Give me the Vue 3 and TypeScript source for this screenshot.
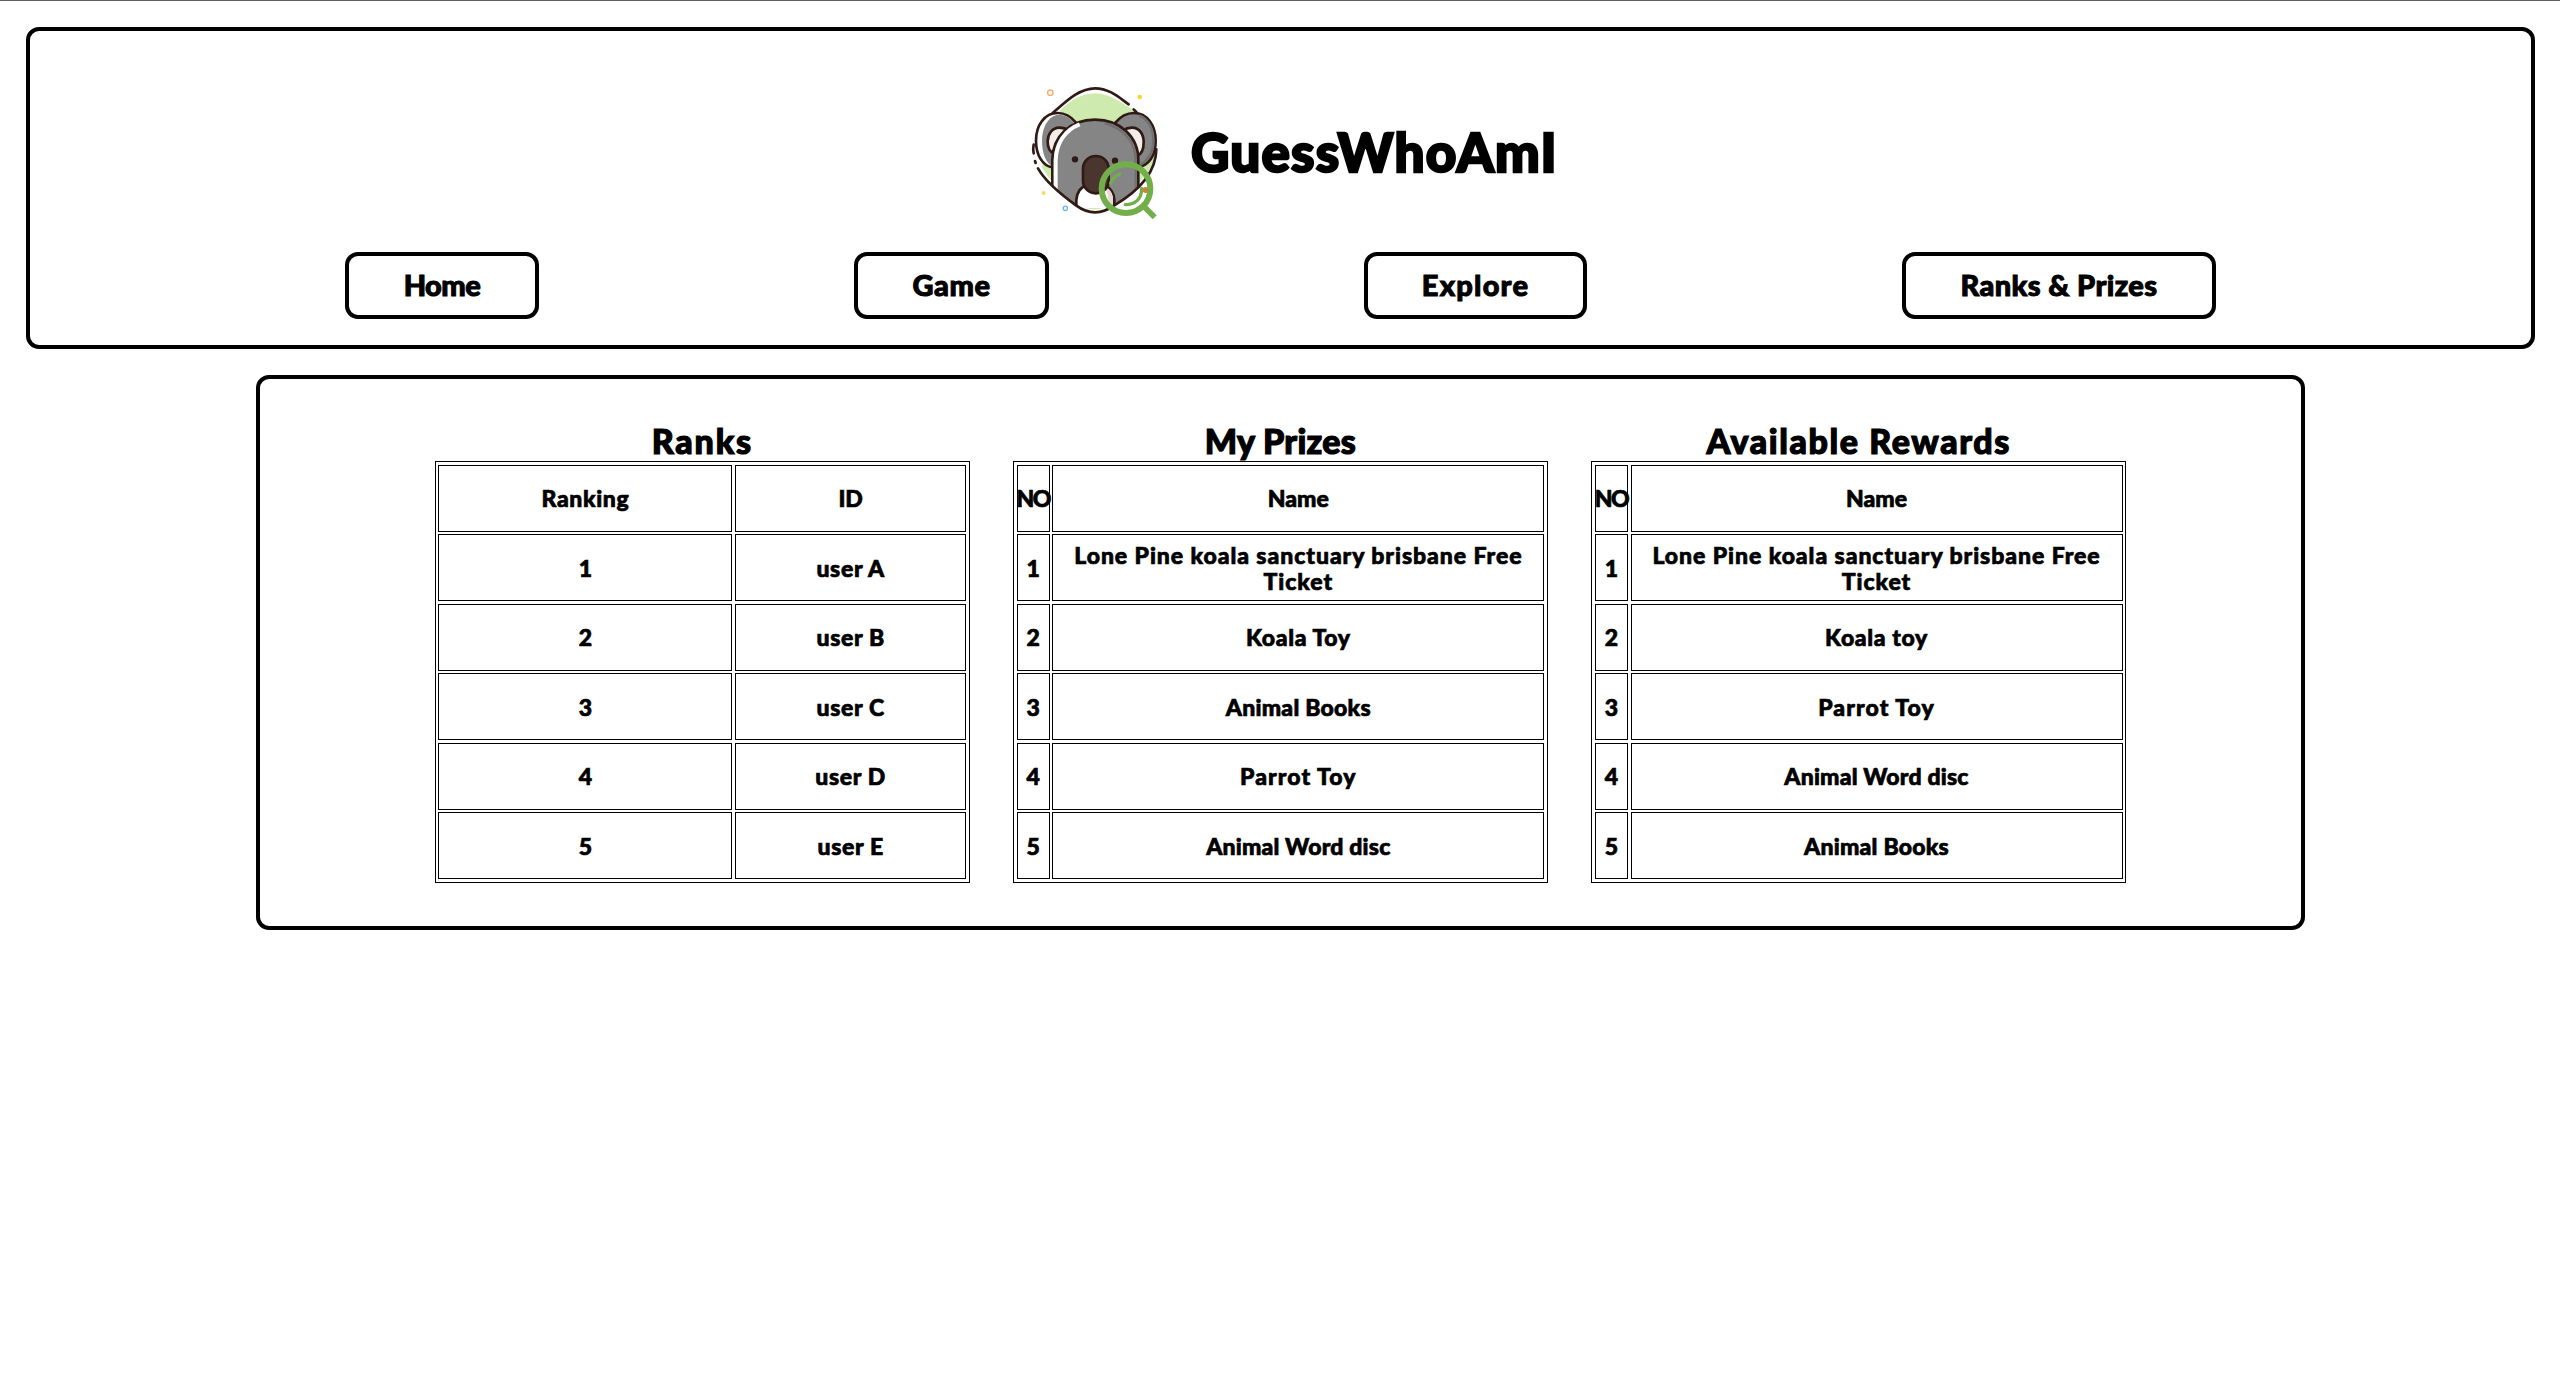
<script setup lang="ts">
interface Board {
  title: string
  tracking: number
  headings: [string, string]
  rows: [string, string][]
  kind: 'ranks' | 'prizes'
}

const links: { label: string; width: number; tracking: number }[] = [
  { label: 'Home', width: 194, tracking: -0.5 },
  { label: 'Game', width: 195, tracking: 0.6 },
  { label: 'Explore', width: 223, tracking: 1.2 },
  { label: 'Ranks & Prizes', width: 314, tracking: 0.4 },
]

const ticket = 'Lone Pine koala sanctuary brisbane Free Ticket'

const boards: Board[] = [
  {
    title: 'Ranks',
    tracking: 1.8,
    kind: 'ranks',
    headings: ['Ranking', 'ID'],
    rows: [['1', 'user A'], ['2', 'user B'], ['3', 'user C'], ['4', 'user D'], ['5', 'user E']],
  },
  {
    title: 'My Prizes',
    tracking: 0.3,
    kind: 'prizes',
    headings: ['NO', 'Name'],
    rows: [
      ['1', ticket],
      ['2', 'Koala Toy'],
      ['3', 'Animal Books'],
      ['4', 'Parrot Toy'],
      ['5', 'Animal Word disc'],
    ],
  },
  {
    title: 'Available Rewards',
    tracking: 1.6,
    kind: 'prizes',
    headings: ['NO', 'Name'],
    rows: [
      ['1', ticket],
      ['2', 'Koala toy'],
      ['3', 'Parrot Toy'],
      ['4', 'Animal Word disc'],
      ['5', 'Animal Books'],
    ],
  },
]

const cellTracking: Record<string, number> = {
  NO: -1.6,
  Name: 0,
  ID: 0,
  [ticket]: 0.95,
  'Animal Books': 0.25,
  'Parrot Toy': 1.1,
  'Animal Word disc': 0.2,
}

const spacing = (text: string) => ({ letterSpacing: (cellTracking[text] ?? 0.65) + 'px' })
</script>

<template>
  <div class="page">
    <header class="header">
      <div class="brand">
        <svg class="logo" viewBox="0 0 510 480" aria-hidden="true">
          <defs>
            <clipPath id="face">
              <path d="M0 0H510V300L440 290C420 340 350 380 310 408C275 430 235 430 198 408C165 385 110 345 84 294L0 290Z" />
            </clipPath>
          </defs>
          <path fill="#cfeaae" d="M138 135C170 100 205 70 258 70C305 72 345 105 385 130C430 165 437 200 438 245C430 310 360 370 310 400C270 425 235 425 200 400C160 375 125 340 95 290Z" />
          <g stroke="#2f1a15" stroke-width="8" stroke-linecap="round" fill="none">
            <g clip-path="url(#face)">
              <path fill="#fff" d="M198 158C180 136 165 129 143 129C104 129 78 165 78 212C78 255 98 288 127 292Z" />
              <path fill="#858585" stroke="none" d="M192 158C175 138 160 134 140 135C112 142 96 175 96 212C96 250 108 280 127 288Z" />
              <path fill="#858585" d="M316 158C334 136 350 129 372 129C411 129 437 165 437 212C437 260 415 286 385 291Z" />
              <path stroke="#707070" stroke-width="8" d="M390 138C418 150 430 180 430 212C430 247 414 272 394 282" />
              <path fill="#f4eeea" d="M176 182C167 175 158 173 148 173C127 173 113 192 113 214C113 235 121 247 132 250" />
              <path fill="#f4eeea" d="M338 182C348 175 357 173 366 173C388 173 401 192 401 217C401 240 393 253 382 257" />
              <path fill="#858585" d="M127 380V270C127 200 180 149 255 149C330 149 385 200 385 270V410H127Z" />
              <path stroke="#fff" stroke-width="12" stroke-linecap="butt" d="M137 370V270C139 222 163 180 209 163" />
              <path stroke="#707070" stroke-width="7" d="M287 161C345 177 377 220 377 271V350" />
              <path fill="#fff" d="M199 414V390C201 365 214 350 231 346H281C301 352 313 370 313 390V414" />
              <path fill="#e4d9d3" stroke="none" d="M287 352C303 358 309 373 309 390V408L295 415V384C295 370 290 365 283 358Z" />
            </g>
            <rect x="219" y="258" width="77" height="112" rx="38" fill="#4b352f" />
            <path d="M128 129C165 98 205 55 255 55C300 55 330 85 356 103M371 118L379 126" />
            <path d="M71 224C69 233 69 241 71 250M75 273L77 279M84 295C108 338 158 377 198 406C235 433 275 433 312 407C368 374 438 317 439 238" />
          </g>
          <circle cx="195" cy="268" r="9.5" fill="#2f1a15" />
          <circle cx="315" cy="272" r="9.5" fill="#2f1a15" />
          <circle cx="121" cy="68" r="8" fill="none" stroke="#f5ae68" stroke-width="4" />
          <circle cx="389" cy="81" r="7" fill="#fbd52c" />
          <circle cx="101" cy="369" r="6" fill="#fbdc5c" />
          <circle cx="166" cy="415" r="6.5" fill="none" stroke="#69b5ef" stroke-width="4" />
          <circle cx="407" cy="360" r="9" fill="#dc7c32" />
          <g fill="none" stroke="#72ae4a">
            <circle cx="348" cy="356" r="73" stroke-width="18" />
            <path stroke-width="17" d="M401 409L434 442" />
            <path stroke-width="10" stroke-linecap="round" d="M302 340Q308 321 329 312M395 355C395 386 377 404 346 404" />
          </g>
        </svg>
        <h1>GuessWhoAmI</h1>
      </div>
      <nav class="nav">
        <a
          v-for="link in links"
          :key="link.label"
          class="link"
          :style="{ width: link.width + 'px', letterSpacing: link.tracking + 'px' }"
        >{{ link.label }}</a>
      </nav>
    </header>

    <main class="panel">
      <section v-for="board in boards" :key="board.title" class="board">
        <h2 :style="{ letterSpacing: board.tracking + 'px' }">{{ board.title }}</h2>
        <div class="grid" :class="board.kind">
          <div v-for="heading in board.headings" :key="heading" class="cell" :style="spacing(heading)">{{ heading }}</div>
          <template v-for="row in board.rows" :key="row[0]">
            <div class="cell">{{ row[0] }}</div>
            <div class="cell" :style="spacing(row[1])">{{ row[1] }}</div>
          </template>
        </div>
      </section>
    </main>
  </div>
</template>

<style>
body {
  background: #fff;
}
</style>

<style scoped>
.page {
  box-sizing: border-box;
  height: 1374px;
  padding: 26px 25px 0 26px;
  border-top: 1px solid #5f5f66;
  background: #fff;
  color: #000;
  font-family: Lato, "Open Sans", sans-serif;
  font-weight: 900;
  -webkit-text-stroke: 0.7px #000;
}
.header {
  box-sizing: border-box;
  height: 322px;
  padding-top: 39px;
  border: 4px solid #000;
  border-radius: 13px;
}
.brand {
  display: flex;
  align-items: center;
  height: 160px;
  padding-left: 980px;
}
.logo {
  width: 170px;
  height: 160px;
}
h1 {
  margin: 4px 0 0 11px;
  font-size: 53px;
  line-height: 60px;
  font-weight: 900;
  letter-spacing: 1.2px;
  -webkit-text-stroke-width: 2.4px;
}
.nav {
  display: flex;
  justify-content: space-evenly;
  margin-top: 22px;
}
.link {
  display: flex;
  align-items: center;
  justify-content: center;
  box-sizing: border-box;
  height: 67px;
  padding-bottom: 3px;
  border: 4px solid #000;
  border-radius: 13px;
  font-size: 29px;
  -webkit-text-stroke-width: 1px;
}
.panel {
  display: flex;
  justify-content: center;
  gap: 43.2px;
  box-sizing: border-box;
  width: 2049px;
  height: 555px;
  margin: 26px 0 0 230px;
  padding-top: 42px;
  border: 4px solid #000;
  border-radius: 13px;
}
.board {
  width: 535px;
}
h2 {
  margin: 0;
  height: 40px;
  font-size: 34px;
  line-height: 40px;
  font-weight: 900;
  text-align: center;
  -webkit-text-stroke-width: 1.2px;
}
.grid {
  display: grid;
  box-sizing: border-box;
  height: 422px;
  padding: 2.67px;
  gap: 2.67px;
  border: 1px solid #000;
  grid-template-rows: repeat(6, 1fr);
}
.ranks {
  grid-template-columns: 294px 1fr;
}
.prizes {
  grid-template-columns: 33px 1fr;
}
.cell {
  display: flex;
  align-items: center;
  justify-content: center;
  min-width: 0;
  border: 1px solid #000;
  font-size: 23px;
  line-height: 26px;
  text-align: center;
}
.prizes .cell:nth-child(even) {
  padding: 0 14px;
}
</style>
